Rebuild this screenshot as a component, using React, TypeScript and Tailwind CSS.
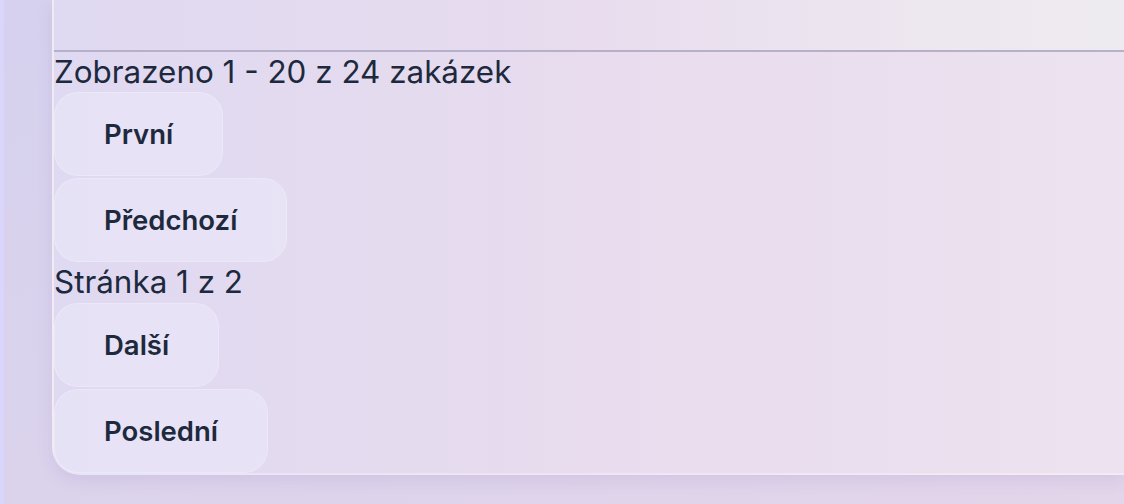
import React from "react";

const buttonClass =
  "self-start rounded-[24px] border border-white/20 bg-[#ebe7f8]/60 px-[49px] py-[22px] text-[27.5px] leading-[38px] font-semibold text-slate-800";

const App: React.FC = () => {
  return (
    <div
      className="min-h-screen w-full overflow-hidden border-l-4 border-[#d9d5fb] bg-gradient-to-br from-[#d5d1ee] via-[#dbd3ec] to-[#e3d5ea] pl-[48px] text-slate-800"
      style={{ fontFamily: "Inter, 'Noto Sans', sans-serif" }}
    >
      <div className="rounded-bl-[28px] border-b-2 border-l-2 border-white/30 bg-gradient-to-r from-[#dfd9f1] via-[#e8dcee] to-[#ede2ef] shadow-[0_6px_16px_rgba(120,100,170,0.12)]">
        {/* konec tabulky */}
        <div className="h-[52px] border-b-2 border-[#b7b0cb] bg-gradient-to-r from-transparent via-transparent to-[#eeebf0]" />

        {/* stránkování */}
        <div className="flex flex-col">
          <span className="text-[31.4px] leading-[40px]">
            Zobrazeno 1 - 20 z 24 zakázek
          </span>
          <button className={buttonClass}>První</button>
          <button className={buttonClass + " mt-[2px]"}>Předchozí</button>
          <span className="text-[31.4px] leading-[40px]">Stránka 1 z 2</span>
          <button className={buttonClass + " mt-px"}>Další</button>
          <button className={buttonClass + " mt-[2px]"}>Poslední</button>
        </div>
      </div>
    </div>
  );
};

export default App;
